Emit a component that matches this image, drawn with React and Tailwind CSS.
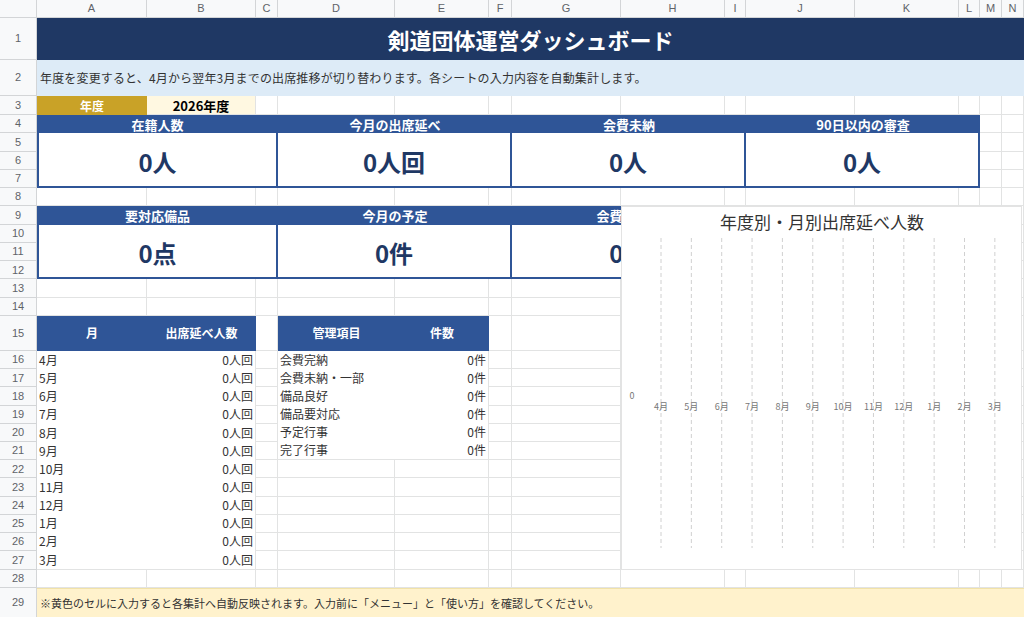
import React from 'react'

const letters = ['', 'A', 'B', 'C', 'D', 'E', 'F', 'G', 'H', 'I', 'J', 'K', 'L', 'M', 'N'];
const months = ['4月', '5月', '6月', '7月', '8月', '9月', '10月', '11月', '12月', '1月', '2月', '3月'];
const items = ['会費完納', '会費未納・一部', '備品良好', '備品要対応', '予定行事', '完了行事'];

// 列の位置（A-C, D-F, G-I, J-L）
const cardCols = [
  'col-start-2 col-span-3 border-l-2',
  'col-start-5 col-span-3',
  'col-start-8 col-span-3',
  'col-start-11 col-span-3',
];

const topCards = [
  { label: '在籍人数', value: '0人' },
  { label: '今月の出席延べ', value: '0人回' },
  { label: '会費未納', value: '0人' },
  { label: '90日以内の審査', value: '0人' },
];

// 4枚目はグラフの下に隠れる
const midCards = [
  { label: '要対応備品', value: '0点' },
  { label: '今月の予定', value: '0件' },
  { label: '会費完納率', value: '0%' },
  { label: '', value: '' },
];

const gridTemplate =
  'grid grid-cols-[37px_110px_109px_22px_117px_94px_23px_109px_104px_21px_109px_104px_21px_22px_22px] grid-rows-[18px_42px_36px_19px_repeat(11,18.27px)_35px_repeat(13,18.23px)_30px]';

function GridLayer() {
  const cells = [];
  for (let r = 0; r < 30; r++) {
    for (let c = 0; c < 15; c++) {
      const key = r + '-' + c;
      if (r === 0) {
        cells.push(
          <div key={key} className="bg-[#f8f9fa] border-r border-b border-[#d3d5d7] flex items-center justify-center text-[11px] text-[#5f6368] font-['Liberation_Sans',sans-serif]">
            {letters[c]}
          </div>
        );
      } else if (c === 0) {
        cells.push(
          <div key={key} className="bg-[#f8f9fa] border-r border-b border-[#d3d5d7] flex items-center justify-center text-[11px] text-[#5f6368] font-['Liberation_Sans',sans-serif]">
            {r}
          </div>
        );
      } else {
        cells.push(<div key={key} className="bg-white border-r border-b border-[#e2e3e3]" />);
      }
    }
  }
  return <div className={gridTemplate + ' col-start-1 row-start-1'}>{cells}</div>;
}

function KpiRow({ cards, headRow, valueRow }) {
  return (
    <>
      {cards.map((card, i) => (
        <div key={'h' + i} className={cardCols[i].replace(' border-l-2', '') + ' ' + headRow + ' bg-[#2f5597] text-white font-bold text-[13px] leading-none flex items-center justify-center'}>
          {card.label}
        </div>
      ))}
      {cards.map((card, i) => (
        <div key={'v' + i} className={cardCols[i] + ' ' + valueRow + ' bg-white border-r-2 border-b-2 border-[#2f5597] text-[#1f3864] font-bold text-[24px] leading-none flex items-center justify-center pt-[4px]'}>
          {card.value}
        </div>
      ))}
    </>
  );
}

function Chart() {
  const xs = months.map((_, i) => 39 + i * 30.35);
  return (
    <div className="absolute left-[621px] top-[206px] w-[401px] h-[364px] bg-white border border-[#e3e3e3]">
      <svg width="399" height="362" viewBox="0 0 399 362" className="font-['Noto_Sans_CJK_JP',sans-serif]">
        <text x="200" y="22" textAnchor="middle" fontSize="17" fill="#333">年度別・月別出席延べ人数</text>
        {xs.map((x, i) => (
          <line key={i} x1={x} y1="31" x2={x} y2="341" stroke="#d0d0d0" strokeWidth="1" strokeDasharray="4 3" />
        ))}
        <text x="10" y="192" textAnchor="middle" fontSize="9" fill="#777">0</text>
        {xs.map((x, i) => (
          <text key={'t' + i} x={x} y="203" textAnchor="middle" fontSize="9" fill="#777">{months[i]}</text>
        ))}
      </svg>
    </div>
  );
}

export default function App() {
  return (
    <div className="relative grid w-[1024px] h-[617px] overflow-hidden bg-white font-['Noto_Sans_CJK_JP','Noto_Sans',sans-serif]">
      <GridLayer />

      <div className={gridTemplate + ' col-start-1 row-start-1'}>
        {/* タイトル */}
        <div className="col-start-2 col-span-14 row-start-2 bg-[#1f3864] text-white font-bold text-[22px] flex items-center justify-center">
          剣道団体運営ダッシュボード
        </div>
        <div className="col-start-2 col-span-14 row-start-3 bg-[#ddebf7] text-[#333] text-[12px] tracking-[0.16px] flex items-center pl-[3px]">
          年度を変更すると、4月から翌年3月までの出席推移が切り替わります。各シートの入力内容を自動集計します。
        </div>
        <div className="col-start-2 row-start-4 bg-[#c9a227] text-white font-bold text-[12px] leading-none flex items-center justify-center">
          年度
        </div>
        <div className="col-start-3 row-start-4 bg-[#fff8e1] text-black font-bold text-[13px] leading-none flex items-center justify-center border-r border-b border-[#e2e3e3]">
          2026年度
        </div>

        <KpiRow cards={topCards} headRow="row-start-5" valueRow="row-start-6 row-span-3" />
        <KpiRow cards={midCards} headRow="row-start-10" valueRow="row-start-11 row-span-3" />

        {/* 月別テーブル */}
        <div className="col-start-2 row-start-16 bg-[#2f5597] text-white font-bold text-[12px] flex items-center justify-center">月</div>
        <div className="col-start-3 row-start-16 bg-[#2f5597] text-white font-bold text-[12px] flex items-center justify-center">出席延べ人数</div>
        <div className="col-start-5 row-start-16 bg-[#2f5597] text-white font-bold text-[12px] flex items-center justify-center">管理項目</div>
        <div className="col-start-6 row-start-16 bg-[#2f5597] text-white font-bold text-[12px] flex items-center justify-center">件数</div>

        <div className="col-start-2 col-span-2 row-start-17 row-span-12 bg-white border-r border-b border-[#e2e3e3] flex flex-col text-[12px] text-[#333]">
          {months.map(m => (
            <div key={m} className="h-[18.23px] flex items-center justify-between px-[2px] leading-none">
              <span>{m}</span>
              <span>0人回</span>
            </div>
          ))}
        </div>

        <div className="col-start-5 col-span-2 row-start-17 row-span-6 bg-white border-r border-b border-[#e2e3e3] flex flex-col text-[12px] text-[#333]">
          {items.map(it => (
            <div key={it} className="h-[18.27px] flex items-center justify-between px-[2px] leading-none">
              <span>{it}</span>
              <span>0件</span>
            </div>
          ))}
        </div>

        <div className="col-start-2 col-span-14 row-start-30 bg-[#fff2cc] border-t border-[#f1e2a8] text-[#333] text-[11px] flex items-center pl-[3px]">
          ※黄色のセルに入力すると各集計へ自動反映されます。入力前に「メニュー」と「使い方」を確認してください。
        </div>
      </div>

      <Chart />
    </div>
  );
}
